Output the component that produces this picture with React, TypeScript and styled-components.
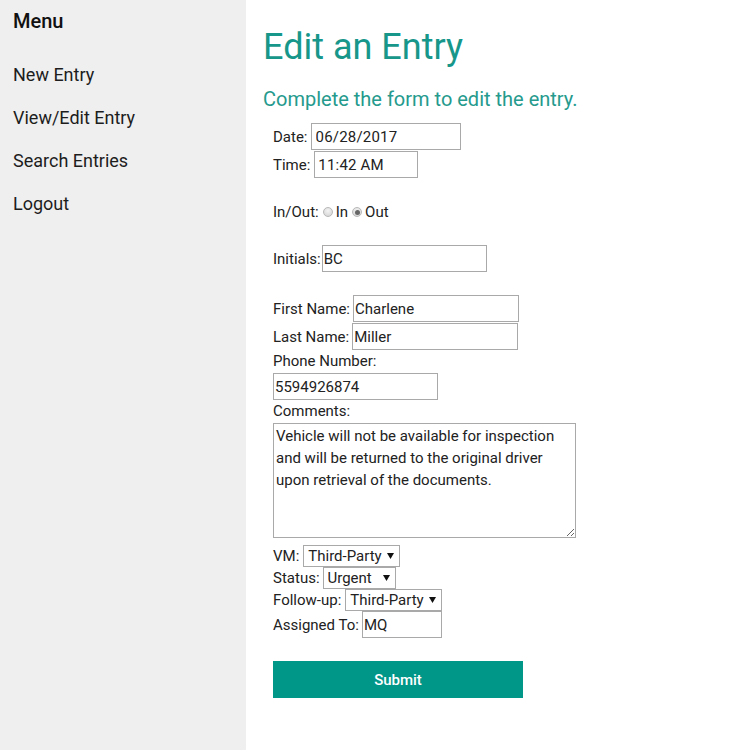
import React from "react";
import styled, { createGlobalStyle } from "styled-components";

const Global = createGlobalStyle`
  html, body { margin: 0; padding: 0; background: #fff; }
  body { font-family: Roboto, "Liberation Sans", sans-serif; color: #222; }
  * { box-sizing: border-box; }
`;

const Page = styled.div`
  display: flex;
  min-height: 750px;
`;

const Sidebar = styled.nav`
  width: 246px;
  flex: none;
  background: #efefef;
  padding: 9px 0 0 13px;
`;

const MenuTitle = styled.div`
  font-size: 20px;
  font-weight: 500;
  line-height: 24px;
  color: #111;
`;

const MenuList = styled.ul`
  list-style: none;
  margin: 20px 0 0;
  padding: 0;
`;

const MenuItem = styled.li`
  font-size: 18px;
  line-height: 43px;
  color: #1d1d1d;
`;

const Main = styled.main`
  flex: 1;
  padding-left: 17px;
`;

const Title = styled.h1`
  margin: 26px 0 0;
  font-size: 36px;
  font-weight: 400;
  line-height: 43px;
  color: #17968a;
`;

const Subtitle = styled.h2`
  margin: 18px 0 0;
  font-size: 20px;
  font-weight: 400;
  line-height: 24px;
  color: #259a8d;
`;

const Form = styled.form`
  display: flex;
  flex-direction: column;
  align-items: flex-start;
  padding-left: 10px;
  font-size: 15px;
  color: #222;
`;

const Row = styled.div<{ $mt?: number; $h?: number; $gap?: number }>`
  display: flex;
  align-items: center;
  gap: ${(p) => p.$gap ?? 3}px;
  margin-top: ${(p) => p.$mt ?? 0}px;
  height: ${(p) => (p.$h ? `${p.$h}px` : "auto")};
`;

const Label = styled.span`
  font-size: 15px;
  line-height: 18px;
  white-space: nowrap;
`;

const TextInput = styled.input<{ $w: number; $pl?: number; $ls?: number }>`
  width: ${(p) => p.$w}px;
  height: 27px;
  border: 1px solid #a9a9a9;
  padding: 0 2px 0 ${(p) => p.$pl ?? 1}px;
  font-family: Roboto, "Liberation Sans", sans-serif;
  font-size: 15px;
  letter-spacing: ${(p) => p.$ls ?? 0}px;
  color: #222;
  background: #fff;
  outline: none;
  margin: 0;
`;

const Radio = styled.span<{ $checked?: boolean }>`
  display: inline-block;
  position: relative;
  flex: none;
  width: 10px;
  height: 10px;
  border-radius: 50%;
  border: 1px solid #b8b8b8;
  background: radial-gradient(circle at 50% 35%, #f4f4f4, #d0d0d0);
  margin: 0 3px 0 4px;
  &::after {
    content: "";
    display: ${(p) => (p.$checked ? "block" : "none")};
    position: absolute;
    left: 1.5px;
    top: 1.5px;
    width: 5px;
    height: 5px;
    border-radius: 50%;
    background: #666;
  }
`;

const RadioGroup = styled.span`
  display: inline-flex;
  align-items: center;
`;

const Comments = styled.textarea`
  width: 303px;
  height: 115px;
  border: 1px solid #a9a9a9;
  padding: 1px 2px;
  font-family: Roboto, "Liberation Sans", sans-serif;
  font-size: 15px;
  line-height: 22px;
  color: #222;
  resize: both;
  margin: 0;
  outline: none;
`;

const SelectWrap = styled.span`
  position: relative;
  display: inline-flex;
`;

const Select = styled.select`
  appearance: none;
  -webkit-appearance: none;
  height: 22px;
  border: 1px solid #a9a9a9;
  border-radius: 0;
  background: #fff;
  padding: 0 17px 0 4px;
  font-family: Roboto, "Liberation Sans", sans-serif;
  font-size: 15px;
  color: #222;
  margin: 0;
  outline: none;
`;

const Caret = styled.svg`
  position: absolute;
  right: 6px;
  top: 8px;
  pointer-events: none;
`;

const SubmitButton = styled.button`
  margin-top: 23px;
  width: 250px;
  height: 37px;
  border: none;
  background: #009688;
  color: #fff;
  font-family: Roboto, "Liberation Sans", sans-serif;
  font-size: 15px;
  font-weight: 500;
  cursor: pointer;
`;

const Dropdown: React.FC<{ value: string; options: string[] }> = ({ value, options }) => (
  <SelectWrap>
    <Select defaultValue={value}>
      {options.map((o) => (
        <option key={o}>{o}</option>
      ))}
    </Select>
    <Caret width="7" height="6" viewBox="0 0 7 6">
      <path d="M0 0 L7 0 L3.5 6 Z" fill="#111" />
    </Caret>
  </SelectWrap>
);

export default function App() {
  return (
    <Page>
      <Global />
      <Sidebar>
        <MenuTitle>Menu</MenuTitle>
        <MenuList>
          <MenuItem>New Entry</MenuItem>
          <MenuItem>View/Edit Entry</MenuItem>
          <MenuItem>Search Entries</MenuItem>
          <MenuItem>Logout</MenuItem>
        </MenuList>
      </Sidebar>
      <Main>
        <Title>Edit an Entry</Title>
        <Subtitle>Complete the form to edit the entry.</Subtitle>
        <Form onSubmit={(e) => e.preventDefault()}>
          <Row $mt={12}>
            <Label>Date:</Label>
            <TextInput $w={150} $pl={4} $ls={0.2} defaultValue="06/28/2017" />
          </Row>
          <Row $mt={1} $gap={4}>
            <Label>Time:</Label>
            <TextInput $w={104} $pl={3} $ls={0.2} defaultValue="11:42 AM" />
          </Row>
          <Row $mt={25} $h={18} $gap={0}>
            <Label>In/Out:</Label>
            <RadioGroup>
              <Radio />
              <Label>In</Label>
            </RadioGroup>
            <RadioGroup>
              <Radio $checked />
              <Label>Out</Label>
            </RadioGroup>
          </Row>
          <Row $mt={24} $gap={1}>
            <Label>Initials:</Label>
            <TextInput $w={165} defaultValue="BC" />
          </Row>
          <Row $mt={23}>
            <Label>First Name:</Label>
            <TextInput $w={166} defaultValue="Charlene" />
          </Row>
          <Row $mt={1}>
            <Label>Last Name:</Label>
            <TextInput $w={166} defaultValue="Miller" />
          </Row>
          <Row $mt={2} $h={18}>
            <Label>Phone Number:</Label>
          </Row>
          <Row $mt={3}>
            <TextInput $w={165} defaultValue="5594926874" />
          </Row>
          <Row $mt={2} $h={18}>
            <Label>Comments:</Label>
          </Row>
          <Row $mt={3}>
            <Comments defaultValue="Vehicle will not be available for inspection and will be returned to the original driver upon retrieval of the documents." />
          </Row>
          <Row $mt={7} $gap={4}>
            <Label>VM:</Label>
            <Dropdown value="Third-Party" options={["Third-Party", "Internal"]} />
          </Row>
          <Row>
            <Label>Status:</Label>
            <Dropdown value="Urgent" options={["Urgent", "Normal"]} />
          </Row>
          <Row $gap={4}>
            <Label>Follow-up:</Label>
            <Dropdown value="Third-Party" options={["Third-Party", "Internal"]} />
          </Row>
          <Row>
            <Label>Assigned To:</Label>
            <TextInput $w={80} defaultValue="MQ" />
          </Row>
          <SubmitButton type="submit">Submit</SubmitButton>
        </Form>
      </Main>
    </Page>
  );
}
